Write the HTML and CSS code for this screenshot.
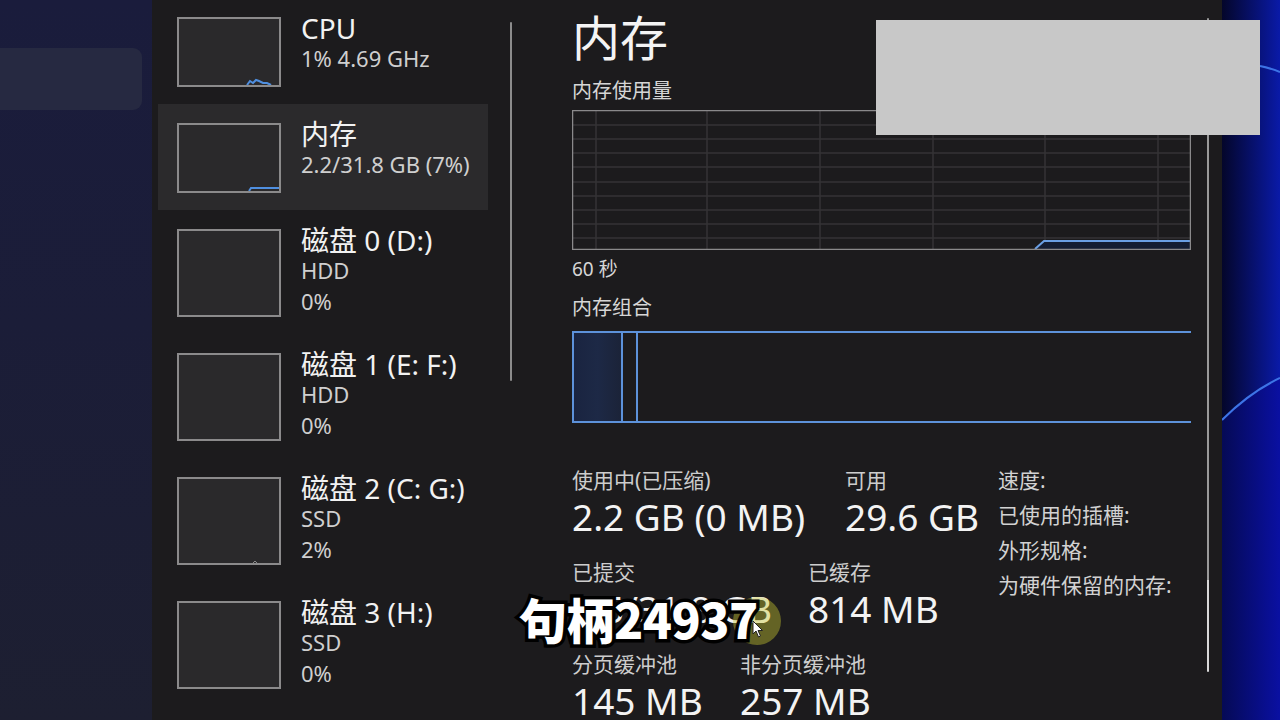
FILE: index.html
```html
<!DOCTYPE html>
<html lang="zh-CN">
<head>
<meta charset="utf-8">
<title>任务管理器 - 内存</title>
<link rel="stylesheet" href="styles.css">
</head>
<body>
<div class="screen">
  <div class="desk-left">
    <div class="desk-tile"></div>
  </div>

  <div class="window">
    <aside class="sidebar">
      <ul class="dev-list">
        <li class="dev">
          <div class="thumb">
            <svg viewBox="0 0 100 66" preserveAspectRatio="none"><polyline points="68,66 71,62 74,64 77,61 80,62 84,64 88,64 92,66" class="spark"/></svg>
          </div>
          <div class="dev-text">
            <div class="dev-name">CPU</div>
            <div class="dev-sub">1% 4.69 GHz</div>
          </div>
        </li>
        <li class="dev selected">
          <div class="thumb">
            <svg viewBox="0 0 100 66" preserveAspectRatio="none"><polyline points="70,66 72,63 100,63" class="spark"/></svg>
          </div>
          <div class="dev-text">
            <div class="dev-name">内存</div>
            <div class="dev-sub">2.2/31.8 GB (7%)</div>
          </div>
        </li>
        <li class="dev disk">
          <div class="thumb"></div>
          <div class="dev-text">
            <div class="dev-name">磁盘 0 (D:)</div>
            <div class="dev-sub">HDD</div>
            <div class="dev-sub">0%</div>
          </div>
        </li>
        <li class="dev disk">
          <div class="thumb"></div>
          <div class="dev-text">
            <div class="dev-name">磁盘 1 (E: F:)</div>
            <div class="dev-sub">HDD</div>
            <div class="dev-sub">0%</div>
          </div>
        </li>
        <li class="dev disk">
          <div class="thumb">
            <svg viewBox="0 0 100 84" preserveAspectRatio="none"><polyline points="74,84 76,82 78,84" class="spark faint"/></svg>
          </div>
          <div class="dev-text">
            <div class="dev-name">磁盘 2 (C: G:)</div>
            <div class="dev-sub">SSD</div>
            <div class="dev-sub">2%</div>
          </div>
        </li>
        <li class="dev disk">
          <div class="thumb"></div>
          <div class="dev-text">
            <div class="dev-name">磁盘 3 (H:)</div>
            <div class="dev-sub">SSD</div>
            <div class="dev-sub">0%</div>
          </div>
        </li>
      </ul>
      <div class="sb-scroll"></div>
    </aside>

    <main class="detail">
      <h1 class="detail-title">内存</h1>
      <div class="section-label">内存使用量</div>
      <svg class="usage-graph" viewBox="0 0 619 140" width="619" height="140">
        <g class="grid">
          <line x1="24" y1="0" x2="24" y2="140"/>
          <line x1="135" y1="0" x2="135" y2="140"/>
          <line x1="248" y1="0" x2="248" y2="140"/>
          <line x1="361" y1="0" x2="361" y2="140"/>
          <line x1="473" y1="0" x2="473" y2="140"/>
          <line x1="586" y1="0" x2="586" y2="140"/>
          <line x1="0" y1="15" x2="619" y2="15"/>
          <line x1="0" y1="29" x2="619" y2="29"/>
          <line x1="0" y1="43" x2="619" y2="43"/>
          <line x1="0" y1="57" x2="619" y2="57"/>
          <line x1="0" y1="72" x2="619" y2="72"/>
          <line x1="0" y1="86" x2="619" y2="86"/>
          <line x1="0" y1="100" x2="619" y2="100"/>
          <line x1="0" y1="114" x2="619" y2="114"/>
          <line x1="0" y1="128" x2="619" y2="128"/>
        </g>
        <path class="usage-fill" d="M463 139 L472 131 L619 131 L619 139 Z"/>
        <polyline class="usage-line" points="463,139 472,131 619,131"/>
        <rect class="frame" x="0.5" y="0.5" width="618" height="139"/>
      </svg>
      <div class="axis-label">60 秒</div>
      <div class="section-label comp-label">内存组合</div>
      <div class="composition">
        <div class="seg seg-use"></div>
        <div class="seg seg-mod"></div>
      </div>

      <div class="stats">
        <div class="stats-main">
          <div class="stat-row">
            <div class="stat c1"><div class="stat-label">使用中(已压缩)</div><div class="stat-value">2.2 GB (0 MB)</div></div>
            <div class="stat"><div class="stat-label">可用</div><div class="stat-value">29.6 GB</div></div>
          </div>
          <div class="stat-row">
            <div class="stat c2"><div class="stat-label">已提交</div><div class="stat-value">3.5/31.8 GB</div></div>
            <div class="stat"><div class="stat-label">已缓存</div><div class="stat-value">814 MB</div></div>
          </div>
          <div class="stat-row">
            <div class="stat c3"><div class="stat-label">分页缓冲池</div><div class="stat-value">145 MB</div></div>
            <div class="stat"><div class="stat-label">非分页缓冲池</div><div class="stat-value">257 MB</div></div>
          </div>
        </div>
        <ul class="stats-side">
          <li>速度:</li>
          <li>已使用的插槽:</li>
          <li>外形规格:</li>
          <li>为硬件保留的内存:</li>
        </ul>
      </div>
    </main>
    <div class="main-scroll"></div>
  </div>

  <div class="desk-right">
    <svg viewBox="0 0 58 720" width="58" height="720" preserveAspectRatio="none">
      <defs>
        <linearGradient id="wallA" x1="0" y1="0" x2="1" y2="0">
          <stop offset="0" stop-color="#04062a"/>
          <stop offset="1" stop-color="#0a1aa8"/>
        </linearGradient>
        <linearGradient id="wallB" x1="0" y1="0" x2="1" y2="0">
          <stop offset="0" stop-color="#050a55"/>
          <stop offset="1" stop-color="#0a10a2"/>
        </linearGradient>
      </defs>
      <rect x="0" y="0" width="58" height="720" fill="url(#wallA)"/>
      <path d="M0 420 Q28 392 58 378 L58 720 L0 720 Z" fill="url(#wallB)"/>
      <path d="M0 420 Q28 392 58 378" fill="none" stroke="#3d74e6" stroke-width="2"/>
      <path d="M38 66 Q48 68 58 72" fill="none" stroke="#3d74e6" stroke-width="2"/>
    </svg>
  </div>

  <div class="redact"></div>
  <div class="cursor-glow"></div>
  <svg class="cursor" viewBox="0 0 12 18" width="12" height="18"><path d="M1 1 L1 14 L4 11 L6.5 17 L8.5 16 L6 10.5 L10.5 10.5 Z" fill="#fff" stroke="#222" stroke-width="1"/></svg>
  <div class="caption">句柄24937</div>
</div>
</body>
</html>
```

FILE: styles.css
```css
* { box-sizing: border-box; }
html, body { margin: 0; padding: 0; }
body {
  width: 1280px;
  height: 720px;
  overflow: hidden;
  background: #1c1b1d;
  font-family: "Noto Sans", "Noto Sans CJK SC", sans-serif;
  color: #f0f0f0;
}
.screen {
  position: relative;
  display: flex;
  width: 1280px;
  height: 720px;
}

/* desktop strips */
.desk-left {
  width: 152px;
  flex: none;
  background: linear-gradient(180deg, #1a1c3c 0%, #1b1d38 45%, #1d1f31 100%);
  padding-top: 48px;
}
.desk-tile {
  width: 142px;
  height: 62px;
  border-radius: 0 9px 9px 0;
  background: #262941;
}
.desk-right {
  width: 58px;
  flex: none;
  display: flex;
}
.desk-right svg { display: block; }

/* window */
.window {
  width: 1070px;
  flex: none;
  display: flex;
  background: #1c1b1d;
}
.sidebar {
  width: 360px;
  flex: none;
  display: flex;
  align-items: flex-start;
}
.dev-list {
  list-style: none;
  margin: -2px 0 0 6px;
  padding: 0;
  width: 330px;
}
.dev {
  display: flex;
  gap: 20px;
  padding: 19px 0 17px 19px;
}
.dev.selected { background: #2b2a2c; }
.thumb {
  width: 104px;
  height: 70px;
  flex: none;
  border: 2px solid #8b8a8b;
  background: #2a292b;
  position: relative;
}
.disk .thumb { height: 88px; }
.thumb svg {
  display: block;
  width: 100%;
  height: 100%;
}
.spark {
  fill: none;
  stroke: #4f8fe0;
  stroke-width: 2;
  vector-effect: non-scaling-stroke;
}
.spark.faint { stroke: #8a8a8a; stroke-width: 1; }
.dev-text { margin-top: -4px; }
.dev-name {
  font-size: 28px;
  line-height: 30px;
  color: #f2f2f2;
  white-space: nowrap;
}
.dev-sub {
  font-size: 22px;
  line-height: 31px;
  color: #cfcfcf;
  white-space: nowrap;
}
.sb-scroll {
  width: 2px;
  height: 359px;
  margin: 22px 0 0 22px;
  background: #8c8c8c;
  border-radius: 1px;
  flex: none;
}

/* detail pane */
.detail {
  width: 619px;
  flex: none;
  margin-left: 60px;
  display: block;
}
.detail-title {
  margin: 12px 0 0;
  font-size: 48px;
  line-height: 52px;
  font-weight: 400;
  color: #f4f4f4;
}
.section-label {
  margin-top: 15px;
  font-size: 20px;
  line-height: 24px;
  color: #d6d6d6;
}
.usage-graph {
  display: block;
  margin-top: 7px;
  width: 619px;
  height: 140px;
}
.grid line {
  stroke: #343336;
  stroke-width: 1.5;
}
.frame {
  fill: none;
  stroke: #8a898b;
  stroke-width: 1.5;
}
.usage-fill { fill: #141d33; }
.usage-line {
  fill: none;
  stroke: #6a9fe4;
  stroke-width: 2;
}
.axis-label {
  margin-top: 8px;
  font-size: 19px;
  line-height: 22px;
  color: #d6d6d6;
}
.comp-label { margin-top: 16px; }
.composition {
  margin-top: 11px;
  height: 92px;
  border-top: 2px solid #5d92da;
  border-bottom: 2px solid #5d92da;
  border-left: 2px solid #5d92da;
  display: flex;
}
.seg {
  height: 100%;
  border-right: 2px solid #5d92da;
}
.seg-use {
  width: 49px;
  background: linear-gradient(90deg, #1a2440 0%, #1d2946 50%, #1b2338 100%);
}
.seg-mod { width: 15px; }

.stats {
  margin-top: 45px;
  display: flex;
}
.stats-main { width: 426px; flex: none; }
.stat-row {
  display: flex;
  margin-bottom: 21px;
}
.stat.c1 { width: 273px; }
.stat.c2 { width: 236px; }
.stat.c3 { width: 168px; }
.stat-label {
  font-size: 21px;
  line-height: 24px;
  color: #cdcdcd;
  white-space: nowrap;
}
.stat-value {
  margin-top: 3px;
  font-size: 37px;
  line-height: 44px;
  color: #f3f3f3;
  white-space: nowrap;
}
.stats-side {
  list-style: none;
  margin: -5px 0 0;
  padding: 0;
  font-size: 21px;
  line-height: 35px;
  color: #d2d2d2;
  white-space: nowrap;
}
.main-scroll {
  width: 2px;
  height: 654px;
  margin: 18px 0 0 16px;
  background: linear-gradient(180deg, #9a9a9a 0%, #9a9a9a 86%, #d8d8d8 86%, #d8d8d8 100%);
  border-radius: 1px;
  flex: none;
}

/* overlays */
.redact {
  position: absolute;
  left: 876px;
  top: 20px;
  width: 384px;
  height: 115px;
  background: #c8c8c8;
}
.cursor-glow {
  position: absolute;
  left: 733px;
  top: 597px;
  width: 48px;
  height: 48px;
  border-radius: 50%;
  background: rgba(200, 200, 50, 0.42);
}
.cursor {
  position: absolute;
  left: 752px;
  top: 620px;
}
.caption {
  position: absolute;
  left: 519px;
  top: 586px;
  font-family: "Noto Sans CJK SC", sans-serif;
  font-weight: 900;
  font-size: 48px;
  line-height: 64px;
  color: #ffffff;
  -webkit-text-stroke: 7px #000;
  paint-order: stroke fill;
  letter-spacing: -0.5px;
  white-space: nowrap;
}
```
